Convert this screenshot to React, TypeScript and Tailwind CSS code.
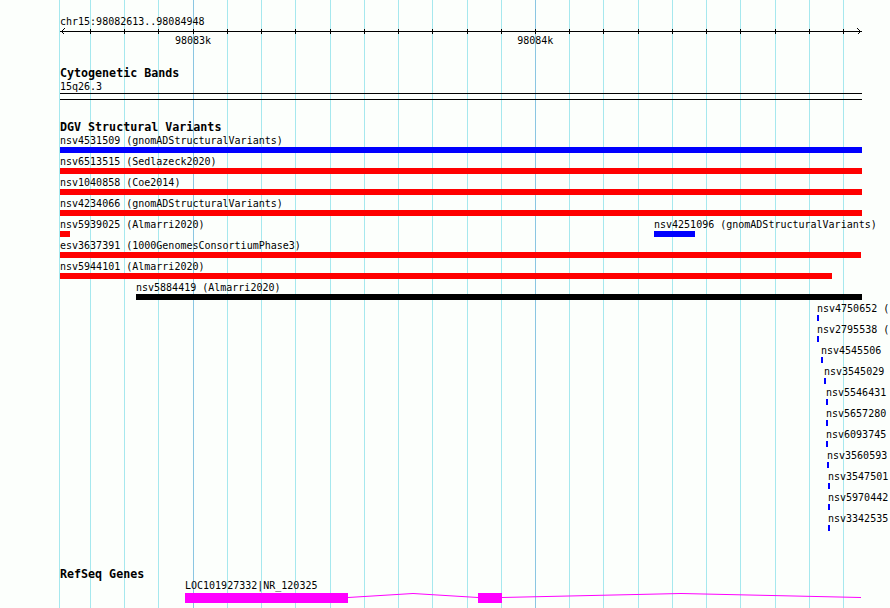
import React from "react"

type Feature = { label: string; x: number; w: number; bar: string }

const GRID = [90, 124, 158, 193, 227, 261, 295, 330, 364, 398, 432, 467, 501, 535, 569, 603, 638, 672, 706, 740, 775, 809, 843]
const MAJOR = [193, 535]

const BLUE = "bg-[#0000ff]"
const RED = "bg-[#ff0000]"
const BLACK = "bg-black"

// labels on the far right are cut by the image edge, keep only what shows
const rows: Feature[][] = [
  [{ label: "nsv4531509 (gnomADStructuralVariants)", x: 60, w: 802, bar: BLUE }],
  [{ label: "nsv6513515 (Sedlazeck2020)", x: 60, w: 802, bar: RED }],
  [{ label: "nsv1040858 (Coe2014)", x: 60, w: 802, bar: RED }],
  [{ label: "nsv4234066 (gnomADStructuralVariants)", x: 60, w: 802, bar: RED }],
  [
    { label: "nsv5939025 (Almarri2020)", x: 60, w: 10, bar: RED },
    { label: "nsv4251096 (gnomADStructuralVariants)", x: 654, w: 41, bar: BLUE },
  ],
  [{ label: "esv3637391 (1000GenomesConsortiumPhase3)", x: 60, w: 801, bar: RED }],
  [{ label: "nsv5944101 (Almarri2020)", x: 60, w: 772, bar: RED }],
  [{ label: "nsv5884419 (Almarri2020)", x: 136, w: 726, bar: BLACK }],
  [{ label: "nsv4750652 (", x: 817, w: 2, bar: BLUE }],
  [{ label: "nsv2795538 (", x: 817, w: 2, bar: BLUE }],
  [{ label: "nsv4545506", x: 821, w: 2, bar: BLUE }],
  [{ label: "nsv3545029", x: 824, w: 2, bar: BLUE }],
  [{ label: "nsv5546431", x: 826, w: 2, bar: BLUE }],
  [{ label: "nsv5657280", x: 826, w: 2, bar: BLUE }],
  [{ label: "nsv6093745", x: 826, w: 2, bar: BLUE }],
  [{ label: "nsv3560593", x: 827, w: 2, bar: BLUE }],
  [{ label: "nsv3547501", x: 828, w: 2, bar: BLUE }],
  [{ label: "nsv5970442", x: 828, w: 2, bar: BLUE }],
  [{ label: "nsv3342535", x: 828, w: 2, bar: BLUE }],
]

function Ruler() {
  return (
    <svg width="890" height="6" shapeRendering="crispEdges" className="block">
      <rect x="60" y="3" width="802" height="1" fill="#000" />
      {GRID.map((g) => (
        <rect key={g} x={g} y="1" width="1" height="5" fill="#000" />
      ))}
      <polyline points="64.5,0.5 61.5,3.5 64.5,6.5" fill="none" stroke="#000" strokeWidth="1" />
      <polyline points="857.5,0.5 860.5,3.5 857.5,6.5" fill="none" stroke="#000" strokeWidth="1" />
    </svg>
  )
}

function Title({ children, className = "" }: { children: React.ReactNode; className?: string }) {
  return <div className={`h-[13px] pl-[60px] text-[11.67px] leading-[13px] font-bold whitespace-nowrap ${className}`}>{children}</div>
}

export default function App() {
  return (
    <div className="relative w-[890px] h-[608px] overflow-hidden bg-[#fcfffc] text-black font-['DejaVu_Sans_Mono',monospace]">
      {/* grid lines sit under the tracks */}
      <div className="absolute inset-0 pointer-events-none">
        <div className="absolute top-0 bottom-0 w-px bg-[#a6e8ee]" style={{ left: 59 }} />
        {GRID.map((g) => (
          <div
            key={g}
            className={`absolute top-0 bottom-0 w-px ${MAJOR.includes(g) ? "bg-[#8ac6e2]" : "bg-[#a6e8ee]"}`}
            style={{ left: g }}
          />
        ))}
      </div>

      <div className="relative">
        <div className="pt-[15px] h-[28px] pl-[60px] text-[10px] leading-[13px]">chr15:98082613..98084948</div>
        <Ruler />
        <div className="flex h-[13px] text-[10px] leading-[13px]">
          <span className="ml-[175px]">98083k</span>
          <span className="ml-[306px]">98084k</span>
        </div>

        <Title className="mt-[20px]">Cytogenetic Bands</Title>
        <div className="h-[13px] pl-[60px] text-[10px] leading-[13px]">15q26.3</div>
        <div className="ml-[60px] w-[802px] h-px bg-black" />
        <div className="ml-[60px] w-[802px] h-px bg-black mt-[5px]" />

        <Title className="mt-[21px]">DGV Structural Variants</Title>
        <div>
          {rows.map((row, i) => (
            <div key={i} className="relative h-[21px]">
              {row.map((f) => (
                <div key={f.label} className="absolute top-0 flex flex-col" style={{ left: f.x }}>
                  <div className="h-[13px] text-[10px] leading-[13px] whitespace-nowrap">{f.label}</div>
                  <div className={`h-[6px] ${f.bar}`} style={{ width: f.w }} />
                </div>
              ))}
            </div>
          ))}
        </div>

        <Title className="mt-[35px]">RefSeq Genes</Title>
        <div className="relative z-10 -mt-[2px] h-[13px] pl-[185px] text-[10px] leading-[13px] whitespace-nowrap">LOC101927332|NR_120325</div>
        <svg width="890" height="11" className="block mt-px">
          <rect x="185" y="0" width="163" height="10" fill="#ff00ff" shapeRendering="crispEdges" />
          <rect x="478" y="0" width="24" height="10" fill="#ff00ff" shapeRendering="crispEdges" />
          <polyline points="348,4.5 413,0.5 478,4.5" fill="none" stroke="#ff00ff" strokeWidth="1" />
          <polyline points="502,4.5 681,0.5 861,4.5" fill="none" stroke="#ff00ff" strokeWidth="1" />
        </svg>
      </div>
    </div>
  )
}
